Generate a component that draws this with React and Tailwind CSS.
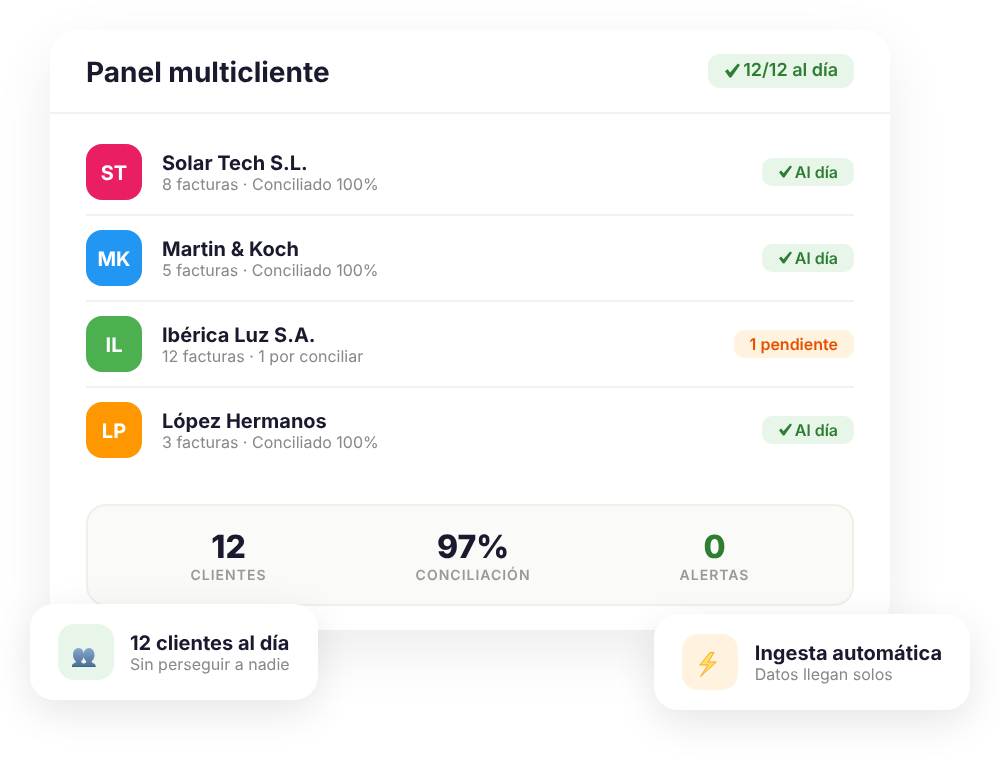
const CLIENTS = [
  { initials: "ST", color: "bg-[#e91e63]", name: "Solar Tech S.L.", sub: "8 facturas · Conciliado 100%" },
  { initials: "MK", color: "bg-[#2196f3]", name: "Martin & Koch", sub: "5 facturas · Conciliado 100%" },
  { initials: "IL", color: "bg-[#4caf50]", name: "Ibérica Luz S.A.", sub: "12 facturas · 1 por conciliar", pending: true },
  { initials: "LP", color: "bg-[#ff9800]", name: "López Hermanos", sub: "3 facturas · Conciliado 100%" },
];

const STATS = [
  { value: "12", label: "CLIENTES", color: "text-[#1a1a2e]" },
  { value: "97%", label: "CONCILIACIÓN", color: "text-[#1a1a2e]" },
  { value: "0", label: "ALERTAS", color: "text-[#2e7d32]" },
];

function Check({ size }) {
  return (
    <svg width={size} height={size} viewBox="0 0 14 14" className="ml-[1px] -mt-[1px]">
      <path d="M0 7.800 2.400 5.800 4.800 8.800 12 .5 14 1.800 5.800 13.500H4.200z" fill="currentColor" />
    </svg>
  );
}

function ClientRow({ client, last }) {
  return (
    <div className={`flex items-center justify-between py-[14px] ${last ? "" : "border-b-2 border-[#f5f0eb]"}`}>
      <div className="flex items-center gap-5">
        <div className={`w-14 h-14 pt-[2px] rounded-2xl flex items-center justify-center text-white text-xl font-bold ${client.color}`}>
          {client.initials}
        </div>
        <div>
          <p className="text-xl leading-6 font-bold text-[#1a1a2e]">{client.name}</p>
          <p className="text-base leading-5 -mt-[1px] text-[#888888]">{client.sub}</p>
        </div>
      </div>
      {client.pending ? (
        <span className="h-7 px-4 rounded-[10px] flex items-center text-base font-semibold bg-[#fff3e0] text-[#e65100]">
          1 pendiente
        </span>
      ) : (
        <span className="h-7 px-4 rounded-[10px] flex items-center gap-[3px] text-base font-semibold bg-[#e8f5e9] text-[#2e7d32]">
          <Check size={13} />
          <span>Al día</span>
        </span>
      )}
    </div>
  );
}

const BUST = "M0 19v-1.500c0-1.500 2-2 3.500-3 .5-.5 .5-1 0-1.500C2 11.500 1 9.500 1 7 1 3 3.300 0 6.500 0s5.500 3 5.500 7c0 2.500-1 4.500-2.500 6-.5.5-.5 1 0 1.500 1.500 1 3.500 1.500 3.500 3V19z";

function PeopleIcon() {
  return (
    <svg width="24" height="19" viewBox="0 0 24 19" className="mr-[5px] mt-[11px]">
      <defs>
        <linearGradient id="bust" x1="0" y1="0" x2="0" y2="1">
          <stop offset="0" stopColor="#86a8cc" />
          <stop offset="1" stopColor="#4a6c97" />
        </linearGradient>
      </defs>
      <path d={BUST} transform="translate(10.500 0)" fill="url(#bust)" />
      <path d={BUST} fill="url(#bust)" />
      <rect x="0" y="18" width="23.500" height="1" fill="#41638e" />
    </svg>
  );
}

function BoltIcon() {
  return (
    <svg width="18" height="25" viewBox="0 0 18 25" className="mr-[4px] mt-[5px]">
      <path d="M11 .5.8 13H9L1.500 24.500 17.300 10H9.300L15 .5z" fill="#ffdd66" stroke="#fb9f14" strokeWidth="0.9" strokeLinejoin="round" />
    </svg>
  );
}

function FloatCard({ className, iconBg, icon, title, sub }) {
  return (
    <div className={`absolute h-24 px-7 bg-white rounded-3xl flex items-center shadow-[0_12px_40px_rgba(0,0,0,0.1)] [will-change:transform] ${className}`}>
      <div className={`w-14 h-14 rounded-2xl flex items-center justify-center ${iconBg}`}>{icon}</div>
      <div>
        <p className="text-xl leading-6 font-bold text-[#1a1a2e] whitespace-nowrap">{title}</p>
        <p className="text-base leading-5 -mt-[1px] text-[#888888] whitespace-nowrap">{sub}</p>
      </div>
    </div>
  );
}

export default function App() {
  return (
    <div className="relative w-[1000px] h-[760px] bg-white overflow-hidden font-['Inter',sans-serif] [text-rendering:geometricPrecision] pt-[30px] pl-[50px]">
      <div className="w-[840px] h-[600px] bg-white rounded-[28px] shadow-[0_20px_60px_rgba(0,0,0,0.08)] [will-change:transform]">
        <div className="h-[84px] px-9 flex items-center justify-between border-b-2 border-[#f5f0eb]">
          <h1 className="text-[28px] font-bold mt-[2px] text-[#1a1a2e]">Panel multicliente</h1>
          <span className="h-[34px] px-4 rounded-xl flex items-center gap-[3px] text-lg font-semibold bg-[#e8f5e9] text-[#2e7d32]">
            <Check size={15} />
            <span>12/12 al día</span>
          </span>
        </div>

        <div className="px-9 pt-4">
          {CLIENTS.map((c, i) => (
            <ClientRow key={c.initials} client={c} last={i === CLIENTS.length - 1} />
          ))}

          <div className="mt-8 h-[102px] rounded-[20px] border-2 border-[#f0efe8] bg-[#fafaf8] flex justify-around items-start pt-[22px] px-7">
            {STATS.map((s) => (
              <div key={s.label} className="flex flex-col items-center">
                <span className={`text-[32px] leading-[38px] font-extrabold ${s.color}`}>{s.value}</span>
                <span className="mt-[1px] text-sm leading-[17px] font-semibold tracking-[1px] text-[#999999]">{s.label}</span>
              </div>
            ))}
          </div>
        </div>
      </div>

      <FloatCard
        className="left-[30px] top-[604px] w-[288px] gap-4"
        iconBg="bg-[#e8f5e9]"
        icon={<PeopleIcon />}
        title="12 clientes al día"
        sub="Sin perseguir a nadie"
      />
      <FloatCard
        className="left-[654px] top-[614px] w-[316px] gap-[17px]"
        iconBg="bg-[#fff3e0]"
        icon={<BoltIcon />}
        title="Ingesta automática"
        sub="Datos llegan solos"
      />
    </div>
  );
}
